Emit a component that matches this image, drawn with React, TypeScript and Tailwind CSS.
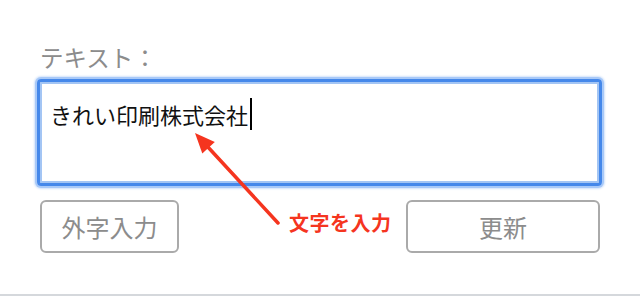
import React from 'react';

const jp = 'font-["Noto_Sans_CJK_JP","Noto_Sans",sans-serif]';

function Annotation() {
  // arrow from the note up to the typed text
  const tip = { x: 195, y: 133 };
  const tail = { x: 278, y: 223 };
  const dx = tip.x - tail.x;
  const dy = tip.y - tail.y;
  const len = Math.hypot(dx, dy);
  const ux = dx / len;
  const uy = dy / len;
  const headLen = 20;
  const half = 8.5;
  const bx = tip.x - ux * headLen;
  const by = tip.y - uy * headLen;
  const p1 = `${bx + -uy * half},${by + ux * half}`;
  const p2 = `${bx - -uy * half},${by - ux * half}`;

  return (
    <>
      <svg className="pointer-events-none absolute left-0 top-0" width="640" height="296">
        <line
          x1={tail.x}
          y1={tail.y}
          x2={bx + ux * 2}
          y2={by + uy * 2}
          stroke="#f5351f"
          strokeWidth="3.5"
          strokeLinecap="round"
        />
        <polygon points={`${tip.x},${tip.y} ${p1} ${p2}`} fill="#f5351f" />
      </svg>
      <span
        className={`absolute left-[289px] top-[208px] text-[20px] font-bold leading-[30px] tracking-[0.5px] text-[#f5351f] ${jp}`}
      >
        文字を入力
      </span>
    </>
  );
}

export default function App() {
  return (
    <div className={`relative flex h-[296px] w-[640px] flex-col border-b-2 border-[#d5d8dc] bg-white ${jp}`}>
      <div className="px-[37px] pt-[43px]">
        <div className="pl-[3px] text-[23.5px] leading-[29px] text-[#8c8c8c]">テキスト：</div>
        <div className="mt-[7px] h-[107px] w-[565px] rounded-[4px] border-[3px] border-[#4588ea] px-[10px] pt-[16px] shadow-[0_0_0_2px_#a8c9f8,0_0_2px_3px_#d2e3fb,inset_0_0_0_2px_#a3c5f4]">
          <span className="text-[22px] leading-[32px] text-[#111]">きれい印刷株式会社</span>
          <span className="ml-[2px] inline-block h-[32px] w-[2px] bg-black align-top" />
        </div>
      </div>
      <div className="mt-[14px] flex justify-between px-[40px]">
        <button
          type="button"
          className="h-[53px] w-[139px] rounded-[6px] border-2 border-[#aaaaaa] bg-white text-[24px] text-[#8c8c8c]"
        >
          外字入力
        </button>
        <button
          type="button"
          className="h-[53px] w-[194px] rounded-[6px] border-2 border-[#aaaaaa] bg-white text-[24px] text-[#8c8c8c]"
        >
          更新
        </button>
      </div>
      <Annotation />
    </div>
  );
}
